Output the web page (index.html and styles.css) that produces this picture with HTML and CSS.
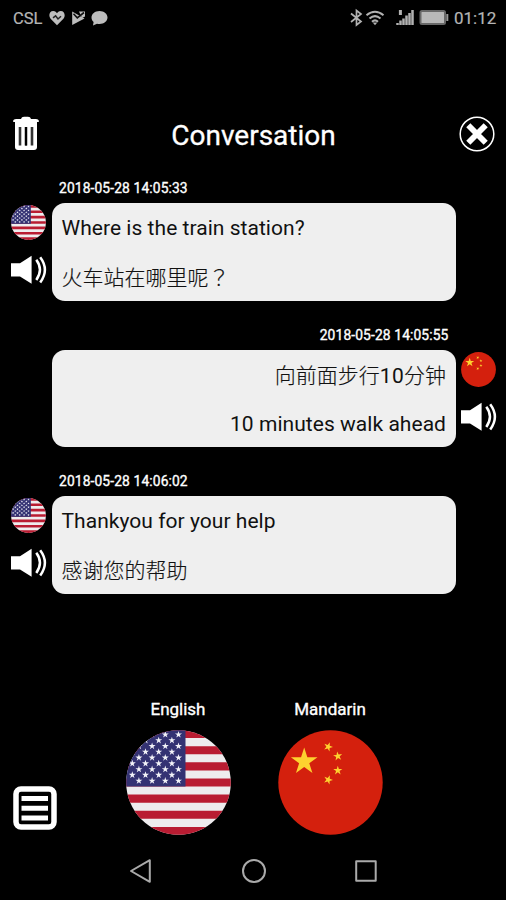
FILE: index.html
```html
<!DOCTYPE html>
<html lang="en">
<head>
<meta charset="utf-8">
<title>Conversation</title>
<link rel="stylesheet" href="styles.css">
</head>
<body>
<svg class="defs" width="0" height="0" aria-hidden="true">
  <defs>
    <path id="star" d="M0-1 .225-.309 .951-.309 .363.118 .588.809 0 .382-.588.809-.363.118-.951-.309-.225-.309Z"/>
    <clipPath id="round"><circle cx="52.5" cy="52.5" r="52.3"/></clipPath>
    <g id="s3" fill="#f2f2f8">
      <use href="#star" transform="translate(12.9 0) scale(3.7)"/><use href="#star" transform="translate(26.1 0) scale(3.7)"/><use href="#star" transform="translate(39.3 0) scale(3.7)"/><use href="#star" transform="translate(52.5 0) scale(3.7)"/>
    </g>
    <symbol id="us" viewBox="0 0 105 105">
      <g clip-path="url(#round)">
        <rect width="105" height="105" fill="#eeecee"/>
        <path d="M0 4.04H105M0 20.2H105M0 36.36H105M0 52.5H105M0 68.65H105M0 84.8H105M0 100.95H105" stroke="#b91c32" stroke-width="8.08"/>
        <rect width="59.5" height="56.5" fill="#343273"/>
        <use href="#s3" y="4.6"/><use href="#s3" y="16.2"/><use href="#s3" y="27.7"/><use href="#s3" y="39.3"/><use href="#s3" y="50.8"/>
        <use href="#s3" x="-6.6" y="10.4"/><use href="#s3" x="-6.6" y="21.9"/><use href="#s3" x="-6.6" y="33.5"/><use href="#s3" x="-6.6" y="45"/>
      </g>
    </symbol>
    <symbol id="cn" viewBox="0 0 105 105">
      <circle cx="52.5" cy="52.5" r="52.2" fill="#d4200d"/>
      <g fill="#fdd22f">
        <use href="#star" transform="translate(26.2 31.6) scale(14)"/>
        <use href="#star" transform="translate(50.2 16.8) rotate(20) scale(4.8)"/>
        <use href="#star" transform="translate(59.8 26.2) rotate(-8) scale(4.8)"/>
        <use href="#star" transform="translate(59.8 40.5) scale(4.8)"/>
        <use href="#star" transform="translate(50.2 49.8) rotate(20) scale(4.8)"/>
      </g>
    </symbol>
    <symbol id="speaker" viewBox="0 0 36 30">
      <path d="M0 8.2H9L20.6.8V28.8L9 21.6H0Z" fill="#fff"/>
      <path d="M25.3 4.8Q32.6 14.8 25.3 25M29.2 2.2Q38.6 14.8 29.2 27.6" fill="none" stroke="#fff" stroke-width="2.5"/>
    </symbol>
  </defs>
</svg>
<div class="screen">
  <header class="status">
    <span class="carrier">CSL</span>
    <svg class="notices" width="60" height="18" viewBox="0 0 60 18" fill="#bdbdbd">
      <path d="M8 16.3 1.6 9.8C-.8 7 .3 2 4.3 2 6.2 2 7.3 3.2 8 4.2 8.7 3.2 9.8 2 11.7 2c4 0 5.1 5 2.7 7.8Z"/>
      <path d="M4 8.800 6.600 6.800 9 10 12 7.200" fill="none" stroke="#222" stroke-width="1.500"/>
      <path d="M23.200 2.400 35.500 9.500 23.200 16Z"/><path d="M30 2.500H36V7.500L33 9Z"/><path d="M24.500 4.800 28.300 8.800 35 3.500" fill="none" stroke="#111" stroke-width="1.600"/>
      <path d="M50.500 2c4.500 0 8 2.900 8 6.500s-3.500 6.500-8 6.500c-1 0-1.700-.1-2.500-.3L44 16.400l.6-3.500C43.200 11.700 42.500 10.200 42.500 8.500c0-3.600 3.500-6.500 8-6.500Z"/>
    </svg>
    <svg class="signals" width="100" height="20" viewBox="0 0 100 20" fill="none" stroke="#b2b2b2">
      <path d="M1 5.500 11 13.500 6.500 17V2.500L11 6 1 14" stroke-width="1.700"/>
      <path d="M16.500 7.200Q25 .2 33.500 7.200M19.500 10.500Q25 5.800 30.500 10.500M22 13.700Q25 11 28 13.700" stroke-width="2"/>
      <path d="m22.700 14.500 2.300 2.700 2.300-2.700Z" fill="#b2b2b2" stroke="none"/>
      <path d="M47.500 17V15M50.500 17V12.500M53.500 17V10.500M56.500 17V7.500M59.500 17V5M62.500 17V2" stroke-width="2.500"/>
      <path d="M50.400 2v5" stroke-width="3"/>
      <rect x="70.500" y="3" width="24.500" height="13" rx="1.500" fill="#b8b8b8" stroke="#686868" stroke-width="2"/>
      <path d="M97.300 6v7" stroke="#999" stroke-width="2"/>
    </svg>
    <span class="clock">01:12</span>
  </header>
  <div class="titlebar">
    <svg width="28" height="36" viewBox="0 0 28 36">
      <path d="M1.200 6V4.500Q1.500 3.200 4 3H9Q9.500.8 12 .8H16Q18.500.8 19 3H24Q26.500 3.200 26.800 4.500V6Z" fill="#fff"/>
      <path d="M3 6H25V31Q25 34 22 34H6Q3 34 3 31Z" fill="#fff"/>
      <path d="M8 11V29.500M14 11V29.500M20 11V29.500" stroke="#333" stroke-width="2.600"/>
      <path d="M14 11V29.500" stroke="#000" stroke-width="2"/>
    </svg>
    <h1>Conversation</h1>
    <svg width="36" height="36" viewBox="0 0 36 36" fill="none" stroke="#fff">
      <circle cx="18" cy="18" r="16.800" stroke-width="1.500"/>
      <path d="M9.300 9.300 26.700 26.700M26.700 9.300 9.300 26.700" stroke-width="5.800"/>
    </svg>
  </div>
  <main>
    <section class="message">
      <time>2018-05-28 14:05:33</time>
      <div class="side"><svg class="flag"><use href="#us"/></svg><svg class="speaker"><use href="#speaker"/></svg></div>
      <div class="bubble"><p>Where is the train station?</p><p class="zh">火车站在哪里呢<span class="mark" lang="zh-TW">？</span></p></div>
    </section>
    <section class="message reply">
      <time>2018-05-28 14:05:55</time>
      <div class="side"><svg class="flag"><use href="#cn"/></svg><svg class="speaker"><use href="#speaker"/></svg></div>
      <div class="bubble"><p class="zh">向前面步行<span class="digits">10</span>分钟</p><p>10 minutes walk ahead</p></div>
    </section>
    <section class="message">
      <time>2018-05-28 14:06:02</time>
      <div class="side"><svg class="flag"><use href="#us"/></svg><svg class="speaker"><use href="#speaker"/></svg></div>
      <div class="bubble"><p>Thankyou for your help</p><p class="zh">感谢您的帮助</p></div>
    </section>
  </main>
  <footer class="languages">
    <svg class="menu" width="44" height="44" viewBox="0 0 44 44" fill="none" stroke="#fff">
      <rect x="3" y="3" width="38" height="38" rx="5" stroke-width="5.500"/>
      <path d="M8.500 12.500H35M8.500 22.200H35M8.500 32H35" stroke-width="5"/>
    </svg>
    <div class="lang"><span>English</span><svg><use href="#us"/></svg></div>
    <div class="lang"><span>Mandarin</span><svg><use href="#cn"/></svg></div>
  </footer>
  <nav>
    <svg width="24" height="26" viewBox="0 0 24 26"><path d="M2 13 20.800 2.200V23.800Z"/></svg>
    <svg width="26" height="26" viewBox="0 0 26 26"><circle cx="13" cy="13" r="11"/></svg>
    <svg width="24" height="26" viewBox="0 0 24 26"><rect x="2.200" y="3.200" width="19.500" height="19.500"/></svg>
  </nav>
</div>
</body>
</html>
```
FILE: styles.css
```css
* { box-sizing: border-box; }
body { margin: 0; background: #000; color: #fff; font-family: Roboto, "Noto Sans CJK SC", sans-serif; }
svg { display: block; flex: none; }
.defs { position: absolute; }
.screen { width: 506px; height: 900px; overflow: hidden; background: #000; display: flex; flex-direction: column; }
.status { height: 36px; flex: none; display: flex; align-items: center; padding: 0 9px 0 13px; color: #b5b5b5; font-size: 17px; white-space: nowrap; }
.carrier { width: 36px; font-size: 16.5px; -webkit-text-stroke: .2px #b5b5b5; }
.signals { margin-left: auto; }
.clock { width: 43px; margin-left: 4px; -webkit-text-stroke: .2px #b5b5b5; }
.titlebar { height: 62px; margin-top: 79px; padding: 1px 11px 0 12px; display: flex; justify-content: space-between; flex: none; }
h1 { margin: 0; padding-left: 8px; font-size: 28px; line-height: 40px; font-weight: 400; -webkit-text-stroke: .3px #fff; }
main { flex: none; height: 513px; }
.message { height: 146.7px; display: grid; grid-template-columns: 41px 403.5px 41px; grid-template-rows: 26px 97.5px; padding-left: 11px; }
time { grid-column: 2; padding: 0 7px; font-size: 13.8px; letter-spacing: .13px; line-height: 22px; -webkit-text-stroke: .35px #fff; }
.reply time { text-align: right; }
.side { grid-column: 1; grid-row: 2; padding-top: 2px; }
.reply .side { grid-column: 3; padding-left: 5px; }
.bubble { grid-column: 2; grid-row: 2; background: #efefef; border-radius: 13px; color: #111; padding: 0 9.5px; }
.reply .bubble { text-align: right; }
.flag { width: 35px; height: 35px; }
.speaker { width: 36px; height: 30px; margin-top: 15px; }
p { margin: 0; height: 49px; line-height: 51px; font-size: 21px; letter-spacing: .04px; white-space: nowrap; }
.zh { font-family: "Noto Sans CJK SC", sans-serif; font-weight: 300; line-height: 48px; letter-spacing: 0; -webkit-text-stroke: .15px #111; }
.mark { font-family: "Noto Sans CJK TC", sans-serif; }
.digits { font-family: Roboto, sans-serif; font-weight: 400; letter-spacing: .3px; -webkit-text-stroke: 0; }
.languages { height: 152px; flex: none; display: grid; grid-template-columns: 112px 106px 106px; column-gap: 0; padding-left: 13px; }
.menu { align-self: end; margin-bottom: 12px; }
.lang { display: flex; flex-direction: column; align-items: center; }
.lang + .lang { margin-left: 46px; margin-right: -46px; }
.lang span { font-size: 17px; line-height: 38px; height: 40px; -webkit-text-stroke: .35px #fff; }
.lang svg { width: 105px; height: 105px; }
nav { flex: none; display: flex; justify-content: space-between; align-items: center; width: 249px; margin: 16px 0 0 129px; }
nav svg { fill: none; stroke: #aaa; stroke-width: 2; stroke-linejoin: round; }
```
